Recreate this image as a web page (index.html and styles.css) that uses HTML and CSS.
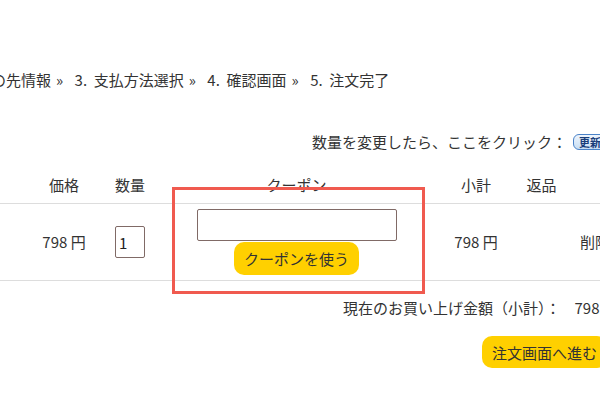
FILE: index.html
```html
<!DOCTYPE html>
<html lang="ja">
<head>
<meta charset="utf-8">
<title>カート</title>
<link rel="stylesheet" href="styles.css">
</head>
<body>
<div class="page">
  <div class="breadcrumb">
    <span class="step">の先情報</span><span class="sep">»</span>
    <span class="step">3.&nbsp; 支払方法選択</span><span class="sep">»</span>
    <span class="step">4.&nbsp; 確認画面</span><span class="sep">»</span>
    <span class="step">5.&nbsp; 注文完了</span>
  </div>

  <div class="update-line">
    <span>数量を変更したら、ここをクリック：</span>
    <button class="update-btn">更新</button>
  </div>

  <div class="cart">
    <div class="cell head"></div>
    <div class="cell head">価格</div>
    <div class="cell head">数量</div>
    <div class="cell head">クーポン</div>
    <div class="cell head">小計</div>
    <div class="cell head">返品</div>
    <div class="cell head"></div>

    <div class="cell"></div>
    <div class="cell">798 円</div>
    <div class="cell"><input class="qty" type="text" value="1"></div>
    <div class="cell coupon">
      <input class="coupon-input" type="text">
      <button class="yellow-btn coupon-btn">クーポンを使う</button>
      <div class="highlight"></div>
    </div>
    <div class="cell">798 円</div>
    <div class="cell"></div>
    <div class="cell">削除</div>
  </div>

  <div class="summary">現在のお買い上げ金額（小計）：<span class="amount">798 円</span></div>

  <div class="checkout-line">
    <button class="yellow-btn checkout-btn">注文画面へ進む</button>
  </div>
</div>
</body>
</html>
```

FILE: styles.css
```css
html, body {
  margin: 0;
  padding: 0;
  background: #fff;
  overflow: hidden;
}
body {
  font-family: "Noto Sans CJK JP", "Noto Sans", sans-serif;
  font-size: 15px;
  line-height: 20px;
  color: #333;
}
.page {
  width: 622px;
}
.breadcrumb {
  margin-top: 70px;
  margin-left: -9px;
  white-space: nowrap;
}
.sep {
  margin: 0 8px 0 5px;
}
.update-line {
  margin-top: 42px;
  display: flex;
  justify-content: flex-end;
  align-items: center;
  height: 20px;
  padding-right: 12px;
}
.update-btn {
  margin-left: 6px;
  height: 16px;
  padding: 0 8px 0 5px;
  border: 1px solid #4a82c8;
  border-radius: 6px;
  background: linear-gradient(#eef5fd, #c7def4);
  color: #1a3d7a;
  font-family: inherit;
  font-size: 11px;
  line-height: 14px;
  font-weight: bold;
}
.cart {
  margin-top: 15px;
  display: grid;
  grid-template-columns: 24px 80px 52px 281px 78px 53px 54px;
}
.cell {
  display: flex;
  flex-direction: column;
  align-items: center;
  justify-content: center;
  text-align: center;
  white-space: nowrap;
  height: 76px;
  border-bottom: 1px solid #ddd;
}
.cell.head {
  height: 20px;
  padding: 8px 0;
}
.qty {
  box-sizing: border-box;
  width: 30px;
  height: 32px;
  border: 1px solid #806a66;
  border-radius: 2px;
  padding: 0 3px;
  font-family: inherit;
  font-size: 15px;
  color: #222;
}
.coupon {
  position: relative;
}
.coupon-input {
  box-sizing: border-box;
  width: 200px;
  height: 32px;
  border: 1px solid #806a66;
  border-radius: 2px;
  margin: 0;
}
.yellow-btn {
  background: #ffd000;
  border: none;
  border-radius: 10px;
  font-family: inherit;
  font-size: 15px;
  color: #333;
  padding: 0 10px;
}
.coupon-btn {
  margin-top: 1px;
  height: 33px;
}
.highlight {
  position: absolute;
  top: -17px;
  bottom: -14px;
  left: 16px;
  right: 12px;
  border: 3px solid #f05a4f;
}
.summary {
  margin-top: 17px;
  margin-left: 343px;
  white-space: nowrap;
}
.amount {
  margin-left: 14px;
}
.checkout-line {
  margin-top: 18px;
  display: flex;
  justify-content: flex-end;
  padding-right: 15px;
}
.checkout-btn {
  height: 32px;
}
```
